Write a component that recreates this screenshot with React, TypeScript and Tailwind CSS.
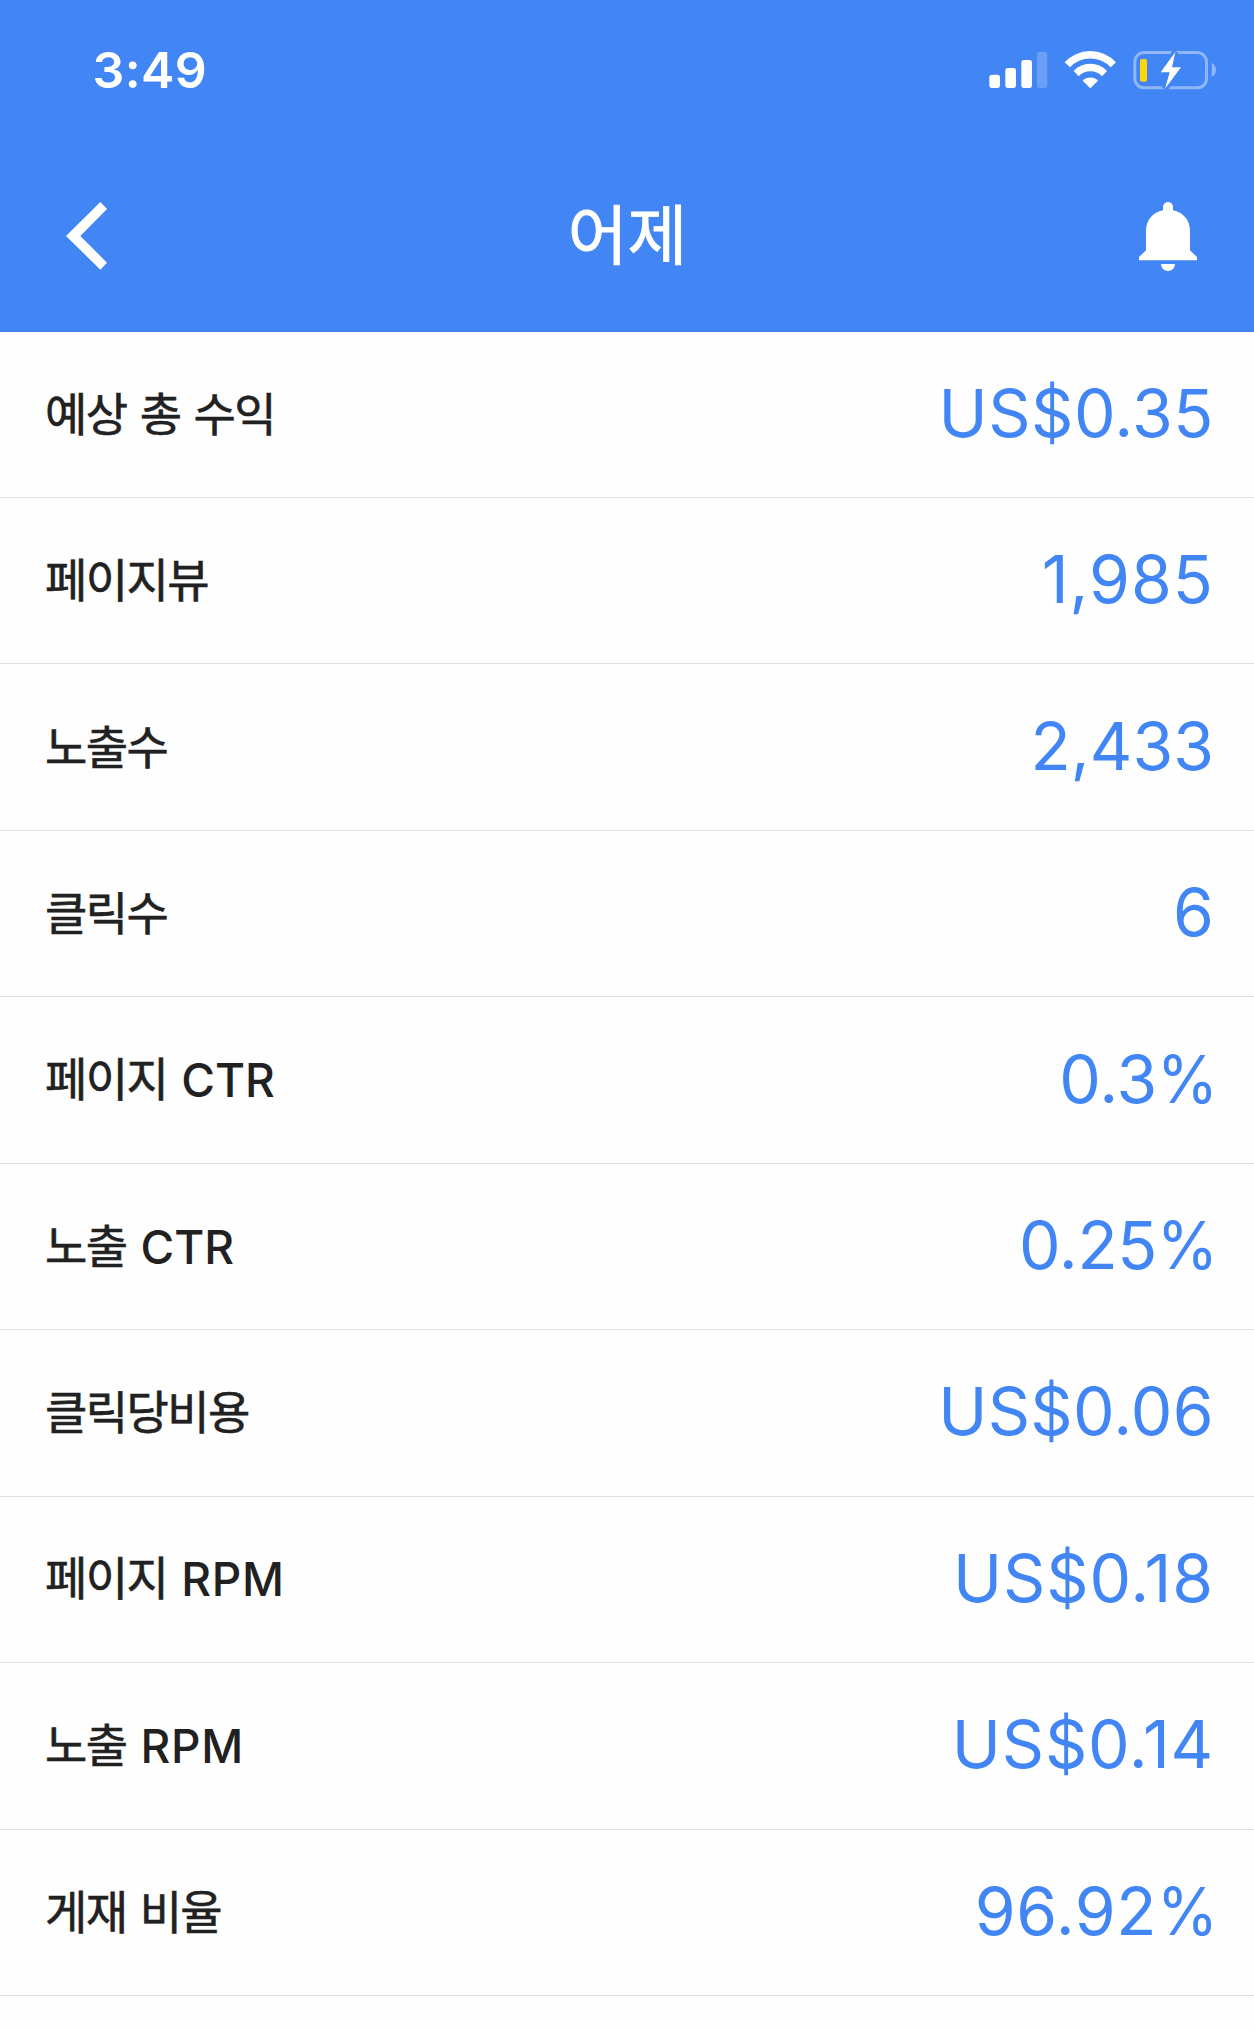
import React from "react"

type Metric = {
  label: string
  unit?: string
  value: string
  percent?: boolean
  spacing: string
}

const metrics: Metric[] = [
  { label: "예상 총 수익", value: "US$0.35", spacing: "tracking-[0.5px]" },
  { label: "페이지뷰", value: "1,985", spacing: "tracking-[1px]" },
  { label: "노출수", value: "2,433", spacing: "tracking-normal" },
  { label: "클릭수", value: "6", spacing: "tracking-normal" },
  { label: "페이지", unit: "CTR", value: "0.3", percent: true, spacing: "tracking-normal" },
  { label: "노출", unit: "CTR", value: "0.25", percent: true, spacing: "tracking-[-0.3px]" },
  { label: "클릭당비용", value: "US$0.06", spacing: "tracking-[0.3px]" },
  { label: "페이지", unit: "RPM", value: "US$0.18", spacing: "tracking-[0.9px]" },
  { label: "노출", unit: "RPM", value: "US$0.14", spacing: "tracking-[0.8px]" },
  { label: "게재 비율", value: "96.92", percent: true, spacing: "tracking-[0.6px]" },
]

const SignalIcon = () => (
  <svg viewBox="0 0 177 120" className="w-[59px] h-10" fill="white">
    <rect x="1" y="74" width="32" height="40" rx="8" />
    <rect x="49" y="54" width="32" height="60" rx="8" />
    <rect x="97" y="30" width="32" height="84" rx="8" />
    <rect x="144" y="6" width="31" height="108" rx="8" opacity="0.22" />
  </svg>
)

const WifiIcon = () => (
  <svg viewBox="0 0 159 120" className="w-[53px] h-10" fill="white">
    <path d="M2 37A104 104 0 0 1 156 37L140 52A84 84 0 0 0 18 52Z" />
    <path d="M29 63A68 68 0 0 1 129 63L114 79A48 48 0 0 0 44 79Z" />
    <path d="M56 92A32 32 0 0 1 102 92L79 115Z" />
  </svg>
)

const BatteryIcon = () => (
  <svg viewBox="0 0 252 120" className="w-[84px] h-10">
    <rect x="5.5" y="7.5" width="215" height="106" rx="28" fill="none" stroke="#8eb6f8" strokeWidth="9" />
    <path d="M236 39Q249 46 249 60Q249 74 236 81Z" fill="#8eb6f8" />
    <rect x="21" y="27" width="21" height="68" rx="6" fill="#ffd60a" />
    {/* charging bolt, outlined in the header blue so it cuts the frame */}
    <path d="M127 6L83 67H110L96 116L144 52H117Z" fill="#4285f4" stroke="#4285f4" strokeWidth="18" />
    <path d="M127 6L83 67H110L96 116L144 52H117Z" fill="white" />
  </svg>
)

const BackIcon = () => (
  <svg viewBox="0 0 123 204" className="w-[41px] h-[68px]" fill="white">
    <path d="M0 102L103 0L123 21L43 102L123 182L103 203Z" />
  </svg>
)

const BellIcon = () => (
  <svg viewBox="0 0 174 207" className="w-[58px] h-[69px]" fill="white">
    <path d="M0 175V165L21 145V86C21 54 42 31 72 25V15a15 15 0 0 1 30 0V25C132 31 153 54 153 86V145L174 165V175Z" />
    <path d="M66 186H108A21 21 0 0 1 66 186Z" />
  </svg>
)

const MetricRow = ({ metric }: { metric: Metric }) => (
  <li className="flex h-[166.45px] items-center justify-between border-b border-[#dedede] pl-[45px] pr-[40px]">
    <span className={`flex items-baseline gap-[14px] text-[46px] text-[#212121] ${metric.unit ? "pb-[4px]" : "pb-[6px]"}`}>
      <span className="font-['Noto_Sans_CJK_KR',sans-serif] tracking-[-1.6px] [word-spacing:4.5px] [-webkit-text-stroke:0.6px_#212121]">{metric.label}</span>
      {metric.unit && (
        <span className={`translate-y-px font-['Inter',sans-serif] font-medium ${metric.unit === "RPM" ? "tracking-[0.8px]" : "tracking-normal"}`}>
          {metric.unit}
        </span>
      )}
    </span>
    <span className="flex pb-[2px] font-['Inter',sans-serif] text-[66px] text-[#4285f4]">
      <span className={metric.spacing}>{metric.value}</span>
      {metric.percent && <span className="-ml-1 -mr-1 origin-right scale-x-[0.94]">%</span>}
    </span>
  </li>
)

export default function App() {
  return (
    <div className="min-h-[2030px] w-full overflow-hidden bg-[#fefefe]">
      <header className="flex h-[331.6px] flex-col bg-[#4285f4] text-white">
        <div className="flex h-[141px] items-center justify-between pb-px pl-[92.5px] pr-[37px]">
          <span className="font-['Inter',sans-serif] text-[50px] font-semibold tracking-[0.4px]">3:49</span>
          <div className="flex items-center gap-4">
            <SignalIcon />
            <WifiIcon />
            <BatteryIcon />
          </div>
        </div>
        <div className="grid flex-1 grid-cols-[1fr_auto_1fr] items-center pl-[66px] pr-[57px]">
          <button className="justify-self-start" aria-label="뒤로">
            <BackIcon />
          </button>
          <h1 className="pb-[10px] pr-[8px] font-['Noto_Sans_CJK_KR',sans-serif] text-[65px] [-webkit-text-stroke:0.9px_white]">어제</h1>
          <button className="justify-self-end" aria-label="알림">
            <BellIcon />
          </button>
        </div>
      </header>
      <ul>
        {metrics.map((metric, i) => (
          <MetricRow key={i} metric={metric} />
        ))}
      </ul>
    </div>
  )
}
